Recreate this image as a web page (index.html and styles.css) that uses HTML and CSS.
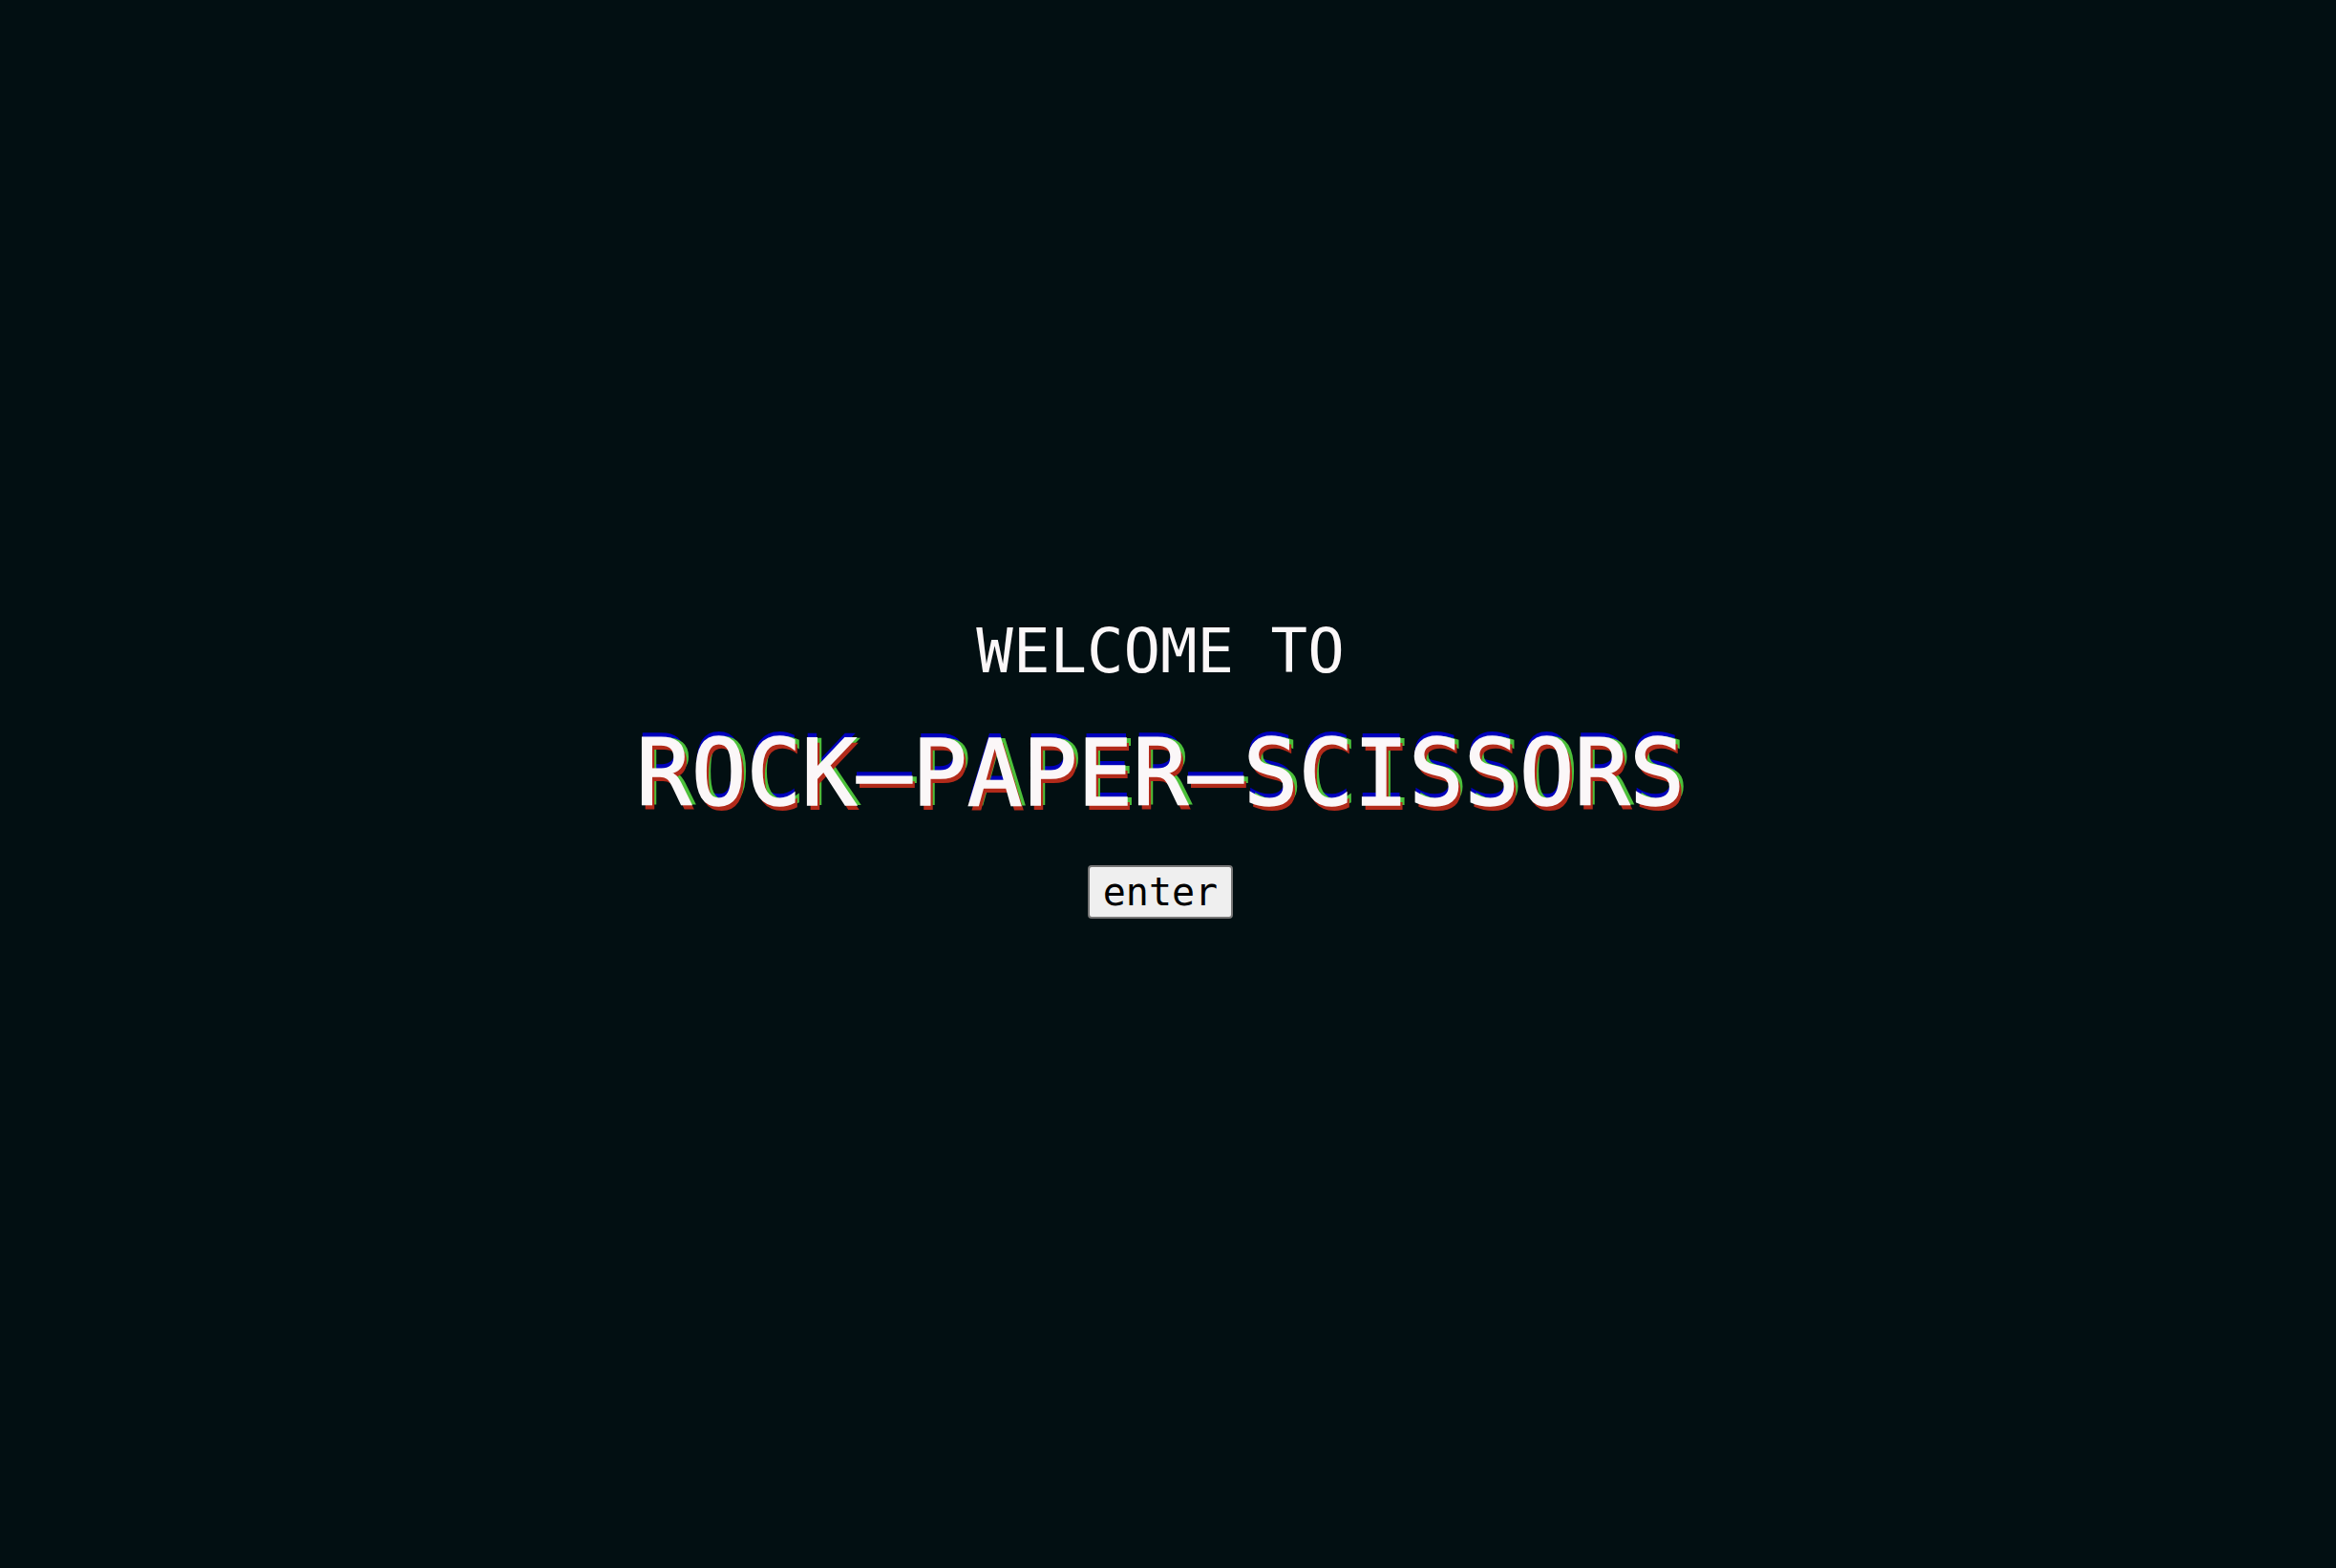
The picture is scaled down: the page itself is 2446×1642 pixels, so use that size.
FILE: index.html
```html
<!DOCTYPE html>
<html lang="en">
<head>
<meta charset="utf-8">
<title>Rock Paper Scissors</title>
<link rel="stylesheet" href="styles.css">
</head>
<body>
<main class="intro">
  <h2 class="welcome">WELCOME TO</h2>
  <h1 class="title">ROCK–PAPER–SCISSORS</h1>
  <button class="enter" type="button">enter</button>
</main>
</body>
</html>
```
FILE: styles.css
```css
html, body {
  margin: 0;
  padding: 0;
  height: 100%;
  background: #020f12;
}
body {
  font-family: "DejaVu Sans Mono", monospace;
  color: #fbf7f8;
}
.intro {
  box-sizing: border-box;
  height: 100%;
  padding: 0 16px 30px 0;
  display: flex;
  flex-direction: column;
  align-items: center;
  justify-content: center;
}
.welcome {
  margin: 0;
  font-size: 64px;
  font-weight: normal;
  line-height: 1;
}
.title {
  margin: 48px 0 0;
  font-size: 96px;
  font-weight: normal;
  line-height: 1;
  -webkit-text-stroke: 1.5px #fbf7f8;
  text-shadow: 3px 5px 0 #b22a1a, 5px 0 0 #4cc03a, 0 -5px 0 #0000bb;
}
.enter {
  margin-top: 48px;
  font-family: "DejaVu Sans Mono", monospace;
  font-size: 40px;
  padding: 0 14px;
  height: 56px;
  background: #efefef;
  color: #000;
  border: 2px solid #767676;
  border-radius: 4px;
}
```
